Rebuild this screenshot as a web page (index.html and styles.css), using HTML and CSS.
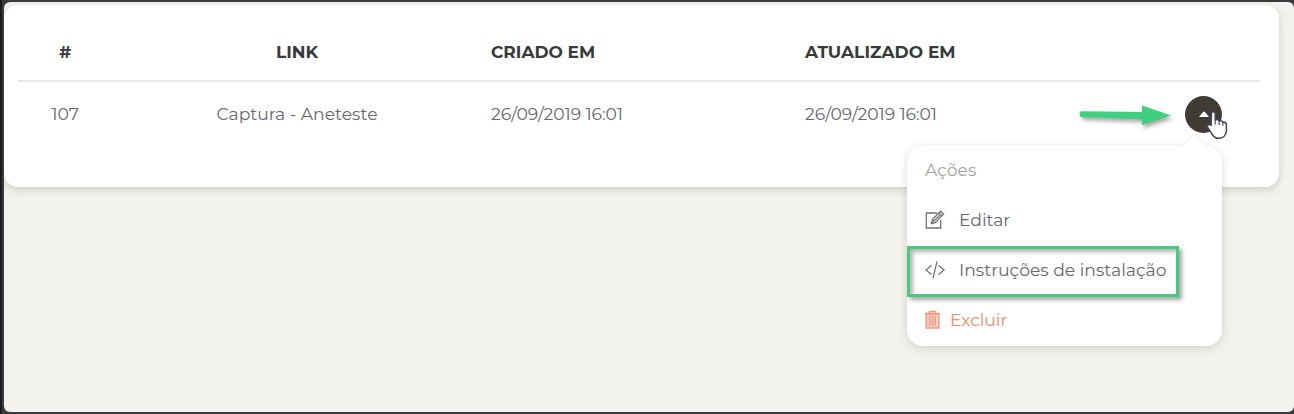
FILE: index.html
```html
<!DOCTYPE html>
<html lang="pt-BR">
<head>
<meta charset="utf-8">
<title>Links</title>
<link rel="stylesheet" href="styles.css">
</head>
<body>
<main class="window">
  <section class="card">
    <div class="row head">
      <span class="cell center">#</span>
      <span class="cell center">LINK</span>
      <span class="cell">CRIADO EM</span>
      <span class="cell updated">ATUALIZADO EM</span>
      <span class="cell"></span>
    </div>
    <div class="row data">
      <span class="cell center">107</span>
      <span class="cell center">Captura - Aneteste</span>
      <span class="cell date">26/09/2019 16:01</span>
      <span class="cell date">26/09/2019 16:01</span>
      <span class="cell actions"><button class="toggle" aria-label="Ações"><svg width="12" height="8" viewBox="0 0 12 8"><path d="M1 7 5 2q1-1 2 0l4 5z" fill="#fff"/></svg></button></span>
    </div>
  </section>
  <nav class="menu">
    <div class="item title"><span>Ações</span></div>
    <div class="item">
      <svg class="icon" width="20" height="20" viewBox="0 0 20 20" fill="none" stroke="#6f7376" stroke-width="1.3"><path d="M12 3H1.3v15h14.4v-8M6.3 13.6l1-4L15.6 1.2l3 2.8-8.4 8.6zM7.3 9.6l2.9 3M13.9 3l2.8 2.8M6.3 13.6l8.4-8.4"/></svg>
      <span>Editar</span>
    </div>
    <div class="item">
      <svg class="icon" width="20" height="20" viewBox="0 0 20 20" fill="none" stroke="#6f7376" stroke-width="1.3"><path d="M6.5 5.2.9 10l5.6 4.5M13.5 5.2l5.6 4.8-5.6 4.5M12 1.5 8 18.3"/></svg>
      <span>Instruções de instalação</span>
    </div>
    <div class="item danger">
      <svg class="icon" width="15" height="20" viewBox="0 0 15 20" fill="none" stroke="#f39a7c" stroke-width="1.5"><path fill="#fbd5c8" d="M1.2 4h12.6v14H1.2z"/><path d="M0 3.6h15M4.5 3V1.6h6V3M4.8 6v10M7.5 6v10M10.2 6v10"/></svg>
      <span>Excluir</span>
    </div>
  </nav>
  <div class="highlight"></div>
  <svg class="arrow" width="104" height="36" viewBox="0 0 104 36"><path d="M6 11.2 67 12V5.5L96 15.5 67 25v-5.8L6 17q-3-3 0-5.8z" fill="#3fd07f"/></svg>
  <svg class="pointer" width="24" height="32" viewBox="0 0 24 32"><path d="M5.5 3.5Q8 1.8 9.2 4.5V11q2.5-1.4 4 1 2.5-.7 3.7 1.2 3-.5 3.5 2.3v6.5q-1 6.5-6.5 7.3-5.5.5-8-4.5l-4.5-7q.5-3.5 3.8-1.5z" fill="#fff" stroke="#45465a" stroke-width="1.5" stroke-linejoin="round"/><path d="M9.2 11v4.5M13.2 12v4M16.9 13.2v3.6" fill="none" stroke="#45465a" stroke-width="1.1"/></svg>
</main>
</body>
</html>
```
FILE: styles.css
```css
* { box-sizing: border-box; }
body {
  margin: 0;
  height: 414px;
  overflow: hidden;
  padding: 2px 0 2px 4px;
  background: linear-gradient(90deg, #1b1b1e 2px, #393b3d 2px);
  font-family: Montserrat, Inter, sans-serif;
  font-size: 17.2px;
  color: #66686c;
}
.window {
  position: relative;
  height: 410px;
  padding-top: 3px;
  background: #f3f2ee;
  border-radius: 6px;
  overflow: hidden;
}
.card {
  width: 1275px;
  height: 182px;
  padding: 15px 19px 0 14px;
  background: #fff;
  border-radius: 14px;
  box-shadow: 0 3px 9px rgba(70, 65, 50, .2);
}
.row {
  display: grid;
  grid-template-columns: 94px 370px 314px 314px 1fr;
  align-items: center;
  white-space: nowrap;
}
.head {
  height: 62px;
  padding-top: 4px;
  border-bottom: 2px solid #e4e7ea;
  font-size: 17px;
  font-weight: 700;
  color: #38393a;
}
.data { height: 64px; }
.cell { padding-left: 9px; padding-bottom: 2px; }
.head .cell { padding-bottom: 0; }
.center { padding-left: 0; text-align: center; }
.updated { letter-spacing: .05px; }
.date { letter-spacing: -.08px; }
.actions { padding-left: 75px; padding-bottom: 0; }
.toggle {
  display: flex;
  align-items: center;
  justify-content: center;
  width: 37px;
  height: 37px;
  padding: 0;
  border: 0;
  border-radius: 50%;
  background: #403c35;
}
.menu {
  position: absolute;
  left: 903px;
  top: 144px;
  width: 315px;
  height: 200px;
  padding-left: 18px;
  background: #fff;
  border-radius: 16px;
  box-shadow: 0 2px 10px rgba(70, 65, 50, .19);
}
.menu::before {
  content: "";
  position: absolute;
  right: 18px;
  top: -9px;
  width: 19px;
  height: 19px;
  background: #fff;
  border: 1px solid #f5f0ed;
  border-right: 0;
  border-bottom: 0;
  transform: rotate(45deg);
}
.item {
  display: flex;
  align-items: center;
  gap: 14px;
  height: 50px;
  white-space: nowrap;
}
.item span { padding-bottom: 2px; }
.title { height: 49px; color: #a3a3a3; }
.danger { gap: 10px; color: #f08c6b; }
.highlight {
  position: absolute;
  left: 903px;
  top: 244px;
  width: 272px;
  height: 51px;
  border: 3px solid #43cc80;
  box-shadow: 3px 3px 4px rgba(0, 0, 0, .35), inset 3px 3px 4px rgba(0, 0, 0, .3);
}
.arrow {
  position: absolute;
  left: 1071px;
  top: 98px;
  filter: drop-shadow(2px 3px 2px rgba(0, 0, 0, .35));
}
.pointer {
  position: absolute;
  left: 1202px;
  top: 107px;
}
```
